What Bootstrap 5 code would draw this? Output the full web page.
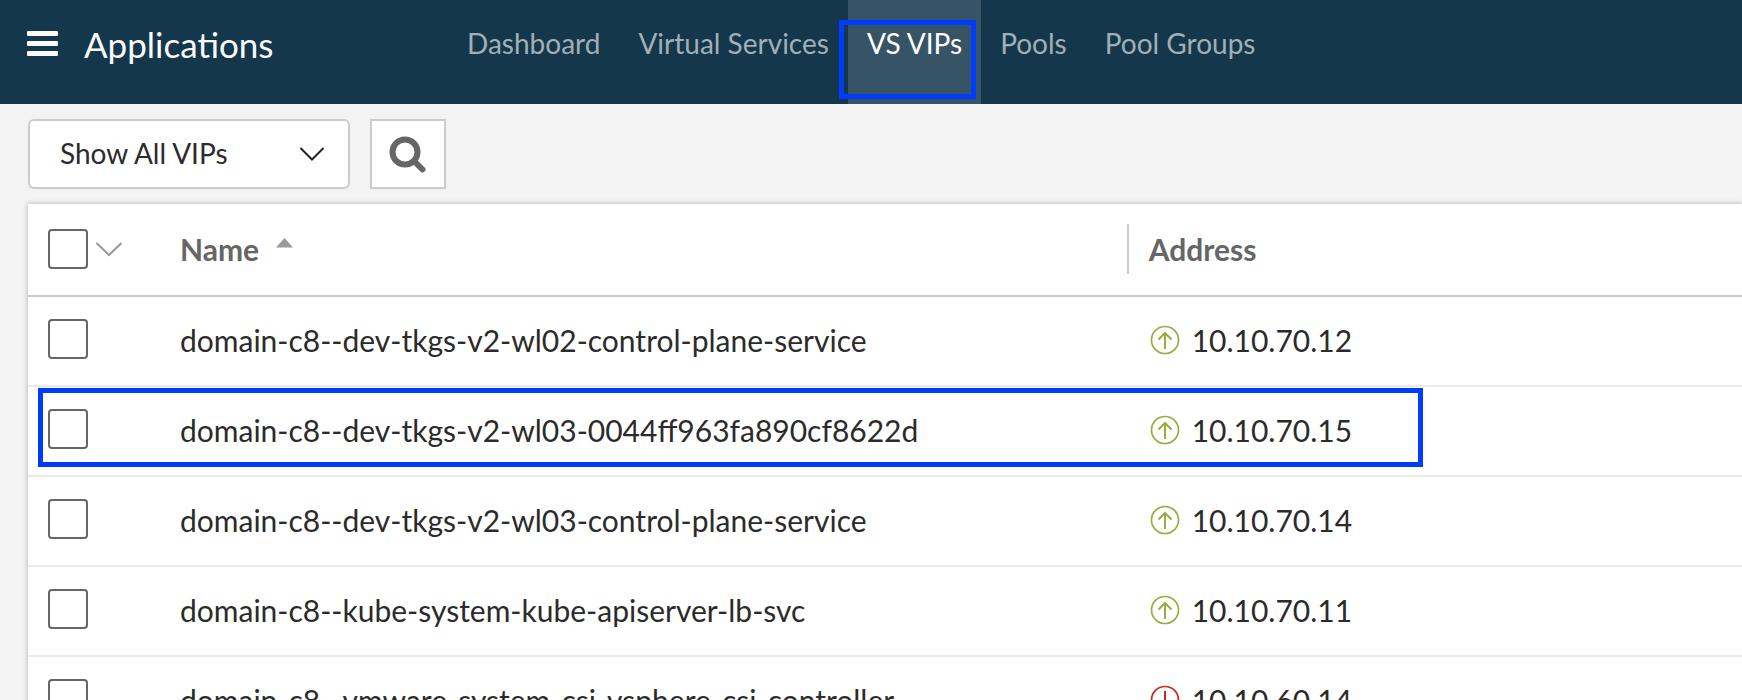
<!DOCTYPE html>
<html lang="en">
<head>
<meta charset="utf-8">
<meta name="viewport" content="width=device-width, initial-scale=1">
<title>Applications - VS VIPs</title>
<link href="https://cdn.jsdelivr.net/npm/bootstrap@5.3.0/dist/css/bootstrap.min.css" rel="stylesheet">
<style>
  body { font-family: Lato, "Open Sans", sans-serif; font-size: 30px; line-height: 40px; color: #2b2b2b; background: #f3f3f3; }
  .top-bar { background: #14374c; height: 104px; padding-left: 27px; }
  .app-title { width: 421px; height: 88px; gap: 26px; font-size: 35px; color: #fafafa; }
  .menu-btn { width: 31px; height: 28px; }
  .top-tabs { font-size: 28px; }
  .top-tabs .nav-link { height: 104px; padding: 23px 19px 0; color: #a1afb7; }
  .top-tabs .nav-link.active { background: #375466; color: #fff; }
  .callout-box { position: absolute; border: 5px solid #003cff; pointer-events: none; }
  .tab-callout { inset: 20px 5px 5px -9px; }
  .row-callout { left: 10px; right: 18.6%; top: 2px; height: 79px; }
  .tool-row { padding: 15px 28px; gap: 20px; }
  .vip-filter { width: 322px; height: 70px; border: 2px solid #ccc; border-radius: 6px; padding: 0 60px 2px 30px; font-size: 28px; color: #2b2b2b;
    background: #fff url("data:image/svg+xml,%3Csvg xmlns='http://www.w3.org/2000/svg' width='26' height='16'%3E%3Cpath d='M1.500 2 13 13.500 24.500 2' fill='none' stroke='%23222' stroke-width='2'/%3E%3C/svg%3E") no-repeat right 23px center / 26px 16px; }
  .search-btn { width: 76px; height: 70px; border: 2px solid #ccc; background: #fff; }
  .list-panel { margin-left: 28px; box-shadow: 0 0 5px rgba(0, 0, 0, .3); }
  .vip-table { table-layout: fixed; color: #2b2b2b; }
  .vip-table th, .vip-table td { padding: 0 20px 2px; vertical-align: middle; background: #fff; }
  .vip-table thead th { height: 92px; padding-bottom: 1px; border-bottom: 2px solid #ccc; color: #666; font-weight: 700; }
  .vip-table tbody td { height: 90px; border-bottom: 2px solid #eaeaea; }
  .vip-table tbody td:first-child { padding-bottom: 4px; }
  .col-check { width: 132px; }
  .col-name { width: 56.4%; }
  .vip-check.form-check-input { width: 40px; height: 40px; margin: 0; border: 2px solid #666; border-radius: 4px; flex: none; float: none; }
  .sort-label { gap: 14px; }
  .addr-head { height: 50px; margin-left: -20px; padding-left: 20px; border-left: 2px solid #ccc; }
  .addr-cell { gap: 12px; padding-left: 3px; }
</style>
</head>
<body>
<svg class="d-none" aria-hidden="true">
  <symbol id="status-up" viewBox="0 0 30 30"><g fill="none" stroke="#97ae40" stroke-width="1.700"><circle cx="15" cy="15" r="13.500"/><path d="M15 24V8.500M8.500 14.500 15 8l6.500 6.500" stroke-width="2"/></g></symbol>
  <symbol id="status-down" viewBox="0 0 30 30"><g fill="none" stroke="#c8281e" stroke-width="1.700"><circle cx="15" cy="15" r="13.500"/><path d="M15 6v15.500M8.500 15.500 15 22l6.500-6.500" stroke-width="2"/></g></symbol>
</svg>
<div class="vh-100 overflow-hidden">
  <header class="top-bar d-flex">
    <div class="app-title d-flex align-items-center">
      <button class="menu-btn btn p-0 border-0 d-flex" type="button" aria-label="Menu">
        <svg width="31" height="28" fill="#fafafa"><rect y="1" width="31" height="5" rx="1"/><rect y="11" width="31" height="5" rx="1"/><rect y="21" width="31" height="5" rx="1"/></svg>
      </button>
      <span>Applications</span>
    </div>
    <nav class="top-tabs nav flex-nowrap text-nowrap" aria-label="Applications">
      <a class="nav-link" href="#">Dashboard</a>
      <a class="nav-link" href="#">Virtual Services</a>
      <a class="nav-link active position-relative" href="#" aria-current="page">VS VIPs<span class="callout-box tab-callout"></span></a>
      <a class="nav-link" href="#">Pools</a>
      <a class="nav-link" href="#">Pool Groups</a>
    </nav>
  </header>
  <div class="tool-row d-flex">
    <select class="vip-filter form-select" aria-label="Filter VIPs"><option>Show All VIPs</option></select>
    <button class="search-btn btn rounded-0 p-0 d-flex align-items-center justify-content-center" type="button" aria-label="Search">
      <svg width="38" height="38" fill="none" stroke="#666"><circle cx="16" cy="17" r="12.500" stroke-width="6"/><path d="m25 26 8.500 8.500" stroke-width="6" stroke-linecap="round"/></svg>
    </button>
  </div>
  <main class="list-panel bg-white">
    <table class="vip-table table mb-0">
      <thead>
        <tr>
          <th class="col-check" scope="col">
            <div class="d-flex align-items-center gap-2">
              <input class="vip-check form-check-input" type="checkbox" aria-label="Select all">
              <svg width="26" height="16" fill="none" stroke="#999" stroke-width="2"><path d="M.500 2 13 14 25.500 2"/></svg>
            </div>
          </th>
          <th class="col-name" scope="col">
            <div class="sort-label d-flex">Name <svg width="22" height="28" fill="#999"><path d="M3 18.500 11.500 9 20 18.500z"/></svg></div>
          </th>
          <th scope="col"><div class="addr-head d-flex align-items-center">Address</div></th>
        </tr>
      </thead>
      <tbody>
        <tr>
          <td><input class="vip-check form-check-input d-block" type="checkbox" aria-label="Select row 1"></td>
          <td>domain-c8--dev-tkgs-v2-wl02-control-plane-service</td>
          <td><div class="addr-cell d-flex align-items-center"><svg width="30" height="30"><use href="#status-up"/></svg>10.10.70.12</div></td>
        </tr>
        <tr class="position-relative">
          <td><input class="vip-check form-check-input d-block" type="checkbox" aria-label="Select row 2"><span class="callout-box row-callout"></span></td>
          <td>domain-c8--dev-tkgs-v2-wl03-0044ff963fa890cf8622d</td>
          <td><div class="addr-cell d-flex align-items-center"><svg width="30" height="30"><use href="#status-up"/></svg>10.10.70.15</div></td>
        </tr>
        <tr>
          <td><input class="vip-check form-check-input d-block" type="checkbox" aria-label="Select row 3"></td>
          <td>domain-c8--dev-tkgs-v2-wl03-control-plane-service</td>
          <td><div class="addr-cell d-flex align-items-center"><svg width="30" height="30"><use href="#status-up"/></svg>10.10.70.14</div></td>
        </tr>
        <tr>
          <td><input class="vip-check form-check-input d-block" type="checkbox" aria-label="Select row 4"></td>
          <td>domain-c8--kube-system-kube-apiserver-lb-svc</td>
          <td><div class="addr-cell d-flex align-items-center"><svg width="30" height="30"><use href="#status-up"/></svg>10.10.70.11</div></td>
        </tr>
        <tr>
          <td><input class="vip-check form-check-input d-block" type="checkbox" aria-label="Select row 5"></td>
          <td>domain-c8--vmware-system-csi-vsphere-csi-controller</td>
          <td><div class="addr-cell d-flex align-items-center"><svg width="30" height="30"><use href="#status-down"/></svg>10.10.60.14</div></td>
        </tr>
      </tbody>
    </table>
  </main>
</div>
<script src="https://cdn.jsdelivr.net/npm/bootstrap@5.3.0/dist/js/bootstrap.bundle.min.js"></script>
</body>
</html>
